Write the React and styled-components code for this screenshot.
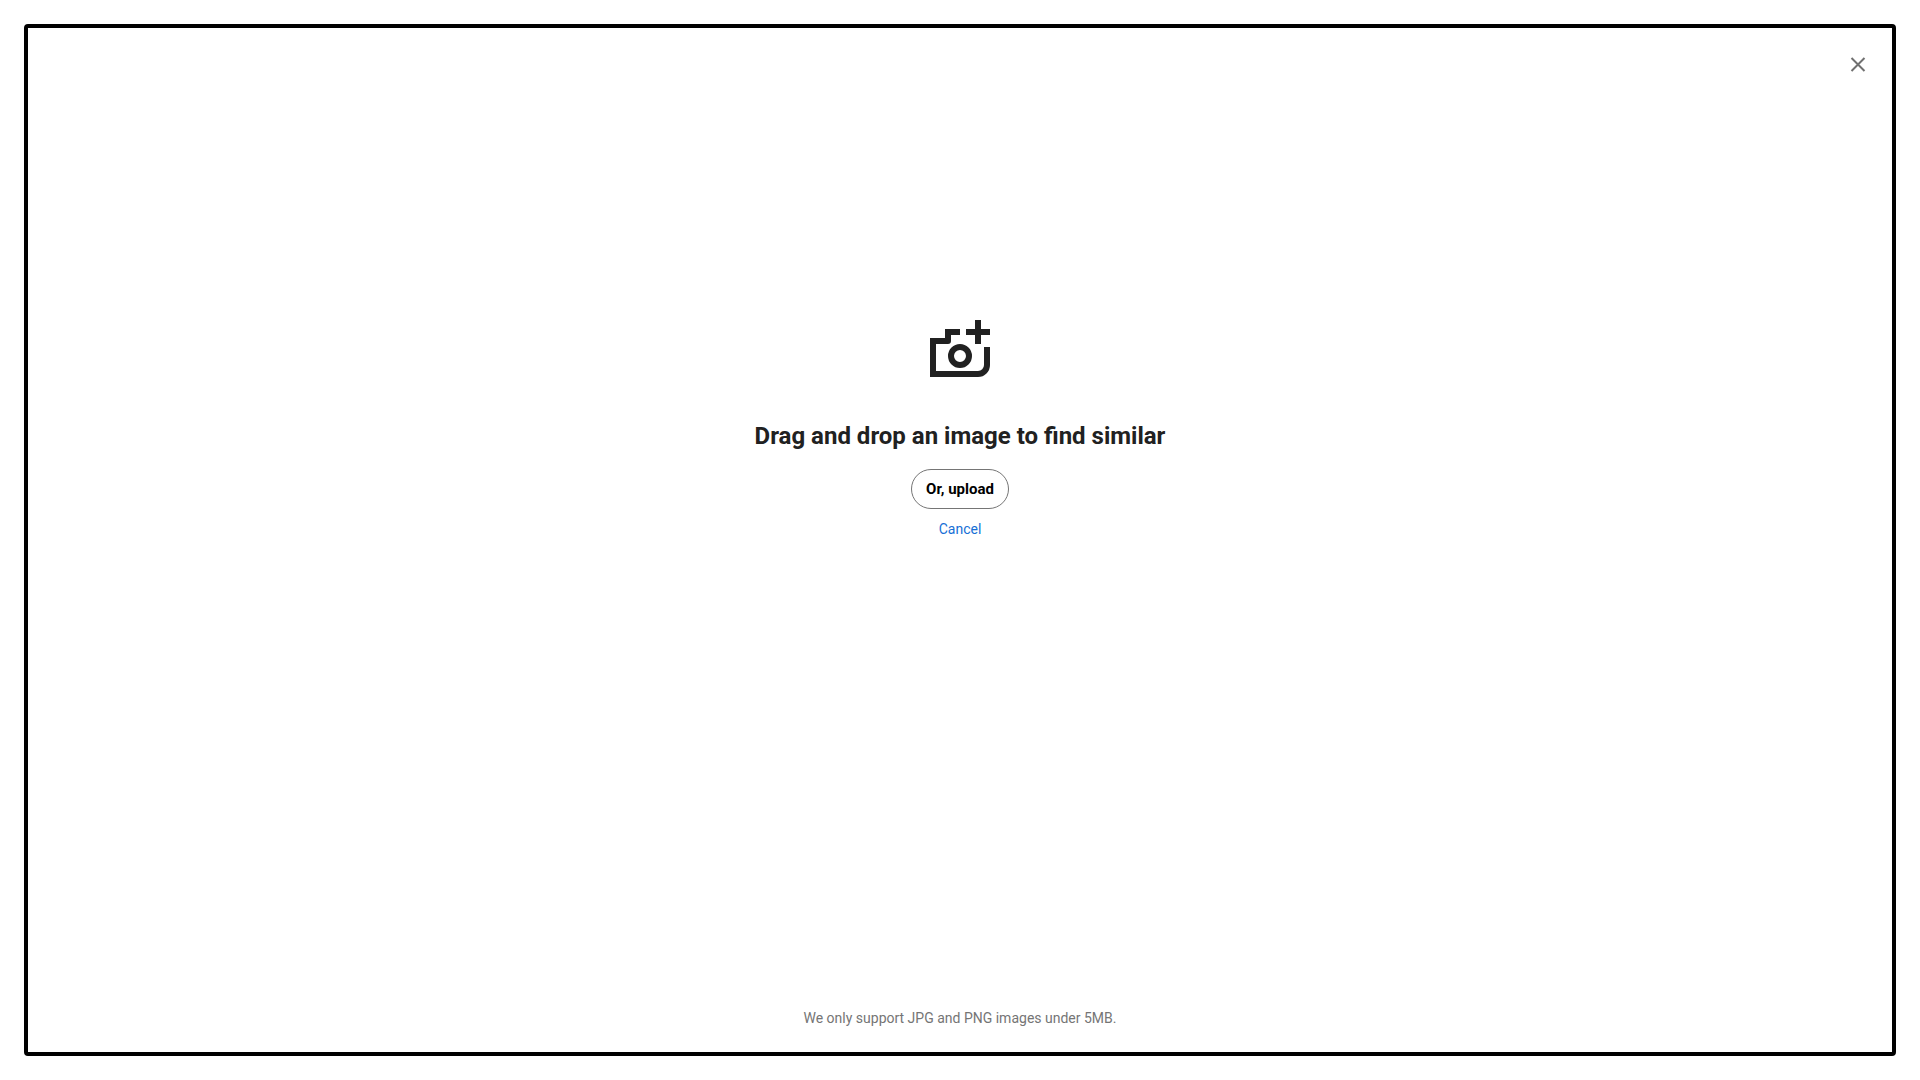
import React, { useRef, useState } from "react";
import styled, { createGlobalStyle } from "styled-components";

const GlobalStyle = createGlobalStyle`
  * {
    box-sizing: border-box;
  }

  body {
    margin: 0;
    background-color: #fff;
    font-family: Roboto, "Liberation Sans", sans-serif;
  }
`;

const Page = styled.div`
  display: flex;
  min-height: 100vh;
  padding: 24px;
`;

const DropZone = styled.main`
  display: flex;
  flex-direction: column;
  flex: 1;
  padding: 24px 22px;
  background-color: ${(props) => (props.$dragging ? "#f5f5f5" : "#fff")};
  border: 4px solid #000;
  border-radius: 4px;
`;

const TopBar = styled.header`
  display: flex;
  justify-content: flex-end;
`;

const CloseButton = styled.button`
  display: flex;
  padding: 0;
  color: #707070;
  background: none;
  border: none;
  cursor: pointer;
`;

const Content = styled.section`
  display: flex;
  flex-direction: column;
  align-items: center;
  margin-top: 238px;
`;

const CameraIcon = styled.svg`
  width: 72px;
  height: 72px;
  color: #212121;
`;

const Title = styled.h1`
  margin: 33px 0 16px;
  color: #212121;
  font-size: 24px;
  font-weight: bold;
  line-height: 34px;
`;

const UploadButton = styled.button`
  height: 40px;
  padding: 0 14px;
  color: #000;
  background-color: #fff;
  border: 1px solid #757575;
  border-radius: 20px;
  font-family: inherit;
  font-size: 15px;
  font-weight: bold;
  cursor: pointer;
`;

const CancelLink = styled.a`
  margin-top: 10px;
  color: #176fd6;
  font-size: 14px;
  line-height: 20px;
  text-decoration: none;
`;

const Footer = styled.footer`
  margin-top: auto;
  color: #757575;
  font-size: 14px;
  line-height: 20px;
  text-align: center;
`;

function App() {
  const [dragging, setDragging] = useState(false);
  const fileInput = useRef(null);

  const onDragOver = (e) => {
    e.preventDefault();
    setDragging(true);
  };

  const onDrop = (e) => {
    e.preventDefault();
    setDragging(false);
  };

  return (
    <Page>
      <GlobalStyle />
      <DropZone
        $dragging={dragging}
        onDragOver={onDragOver}
        onDragLeave={() => setDragging(false)}
        onDrop={onDrop}
      >
        <TopBar>
          <CloseButton type="button" aria-label="Close">
            <svg width="24" height="24" viewBox="0 0 24 24" fill="none">
              <path
                d="M5.5 6l13 13M18.5 6l-13 13"
                stroke="currentColor"
                strokeWidth="2"
              />
            </svg>
          </CloseButton>
        </TopBar>
        <Content>
          <CameraIcon viewBox="0 0 24 24" fill="none" aria-hidden="true">
            <path
              d="M17 2h2v3h3v2h-3v3h-2V7h-3V5h3z"
              fill="currentColor"
            />
            <path
              d="M7 5h5v2H9v2a1 1 0 0 1-1 1H4v9h14a2 2 0 0 0 2-2v-6h2v6a4 4 0 0 1-4 4H2V8h5z"
              fill="currentColor"
            />
            <circle cx="12" cy="14" r="3" stroke="currentColor" strokeWidth="2" />
          </CameraIcon>
          <Title>Drag and drop an image to find similar</Title>
          <UploadButton type="button" onClick={() => fileInput.current.click()}>
            Or, upload
          </UploadButton>
          <input
            ref={fileInput}
            type="file"
            accept="image/jpeg,image/png"
            aria-label="Image"
            hidden
          />
          <CancelLink href="#">Cancel</CancelLink>
        </Content>
        <Footer>We only support JPG and PNG images under 5MB.</Footer>
      </DropZone>
    </Page>
  );
}

export default App;
